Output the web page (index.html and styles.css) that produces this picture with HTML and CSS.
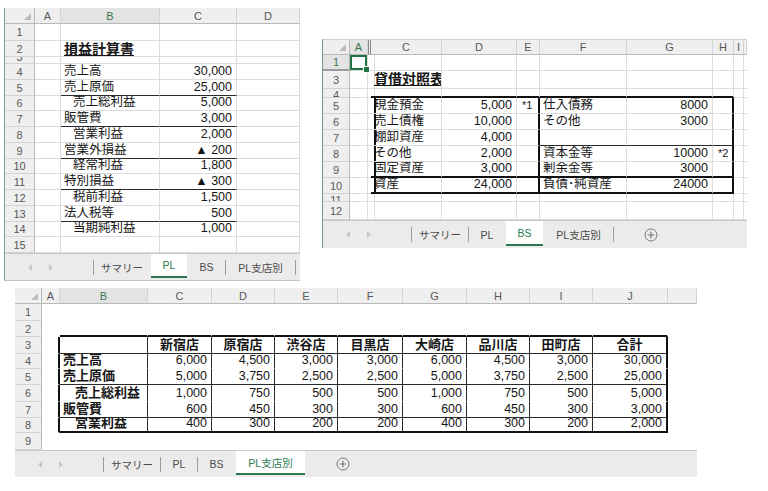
FILE: index.html
```html
<!DOCTYPE html>
<html lang="ja">
<head>
<meta charset="utf-8">
<title>PL / BS</title>
<link rel="stylesheet" href="styles.css">
</head>
<body>

<!-- Sheet 1: 損益計算書 -->
<div class="win w1">
  <div class="grid g1">
    <div class="cn"></div><div class="ch">A</div><div class="ch sel">B</div><div class="ch">C</div><div class="ch">D</div>
    <div class="rh">1</div><div></div><div></div><div></div><div></div>
    <div class="rh">2</div><div></div><div class="ttl">損益計算書</div><div></div><div></div>
    <div class="rh clipb">3</div><div></div><div></div><div></div><div></div>
    <div class="rh">4</div><div></div><div>売上高</div><div class="n">30,000</div><div></div>
    <div class="rh">5</div><div></div><div class="B1">売上原価</div><div class="n B1">25,000</div><div></div>
    <div class="rh">6</div><div></div><div class="ind">売上総利益</div><div class="n">5,000</div><div></div>
    <div class="rh">7</div><div></div><div class="B1">販管費</div><div class="n B1">3,000</div><div></div>
    <div class="rh">8</div><div></div><div class="ind">営業利益</div><div class="n">2,000</div><div></div>
    <div class="rh">9</div><div></div><div class="B1">営業外損益</div><div class="n B1">▲ 200</div><div></div>
    <div class="rh">10</div><div></div><div class="ind">経常利益</div><div class="n">1,800</div><div></div>
    <div class="rh">11</div><div></div><div class="B1">特別損益</div><div class="n B1">▲ 300</div><div></div>
    <div class="rh">12</div><div></div><div class="ind">税前利益</div><div class="n">1,500</div><div></div>
    <div class="rh">13</div><div></div><div class="B1">法人税等</div><div class="n B1">500</div><div></div>
    <div class="rh">14</div><div></div><div class="ind">当期純利益</div><div class="n">1,000</div><div></div>
    <div class="rh">15</div><div></div><div></div><div></div><div></div>
  </div>
  <div class="tabs">
    <div class="nav">
      <svg width="5" height="7" viewBox="0 0 5 7"><path d="M4 0L0 3.5L4 7Z" fill="#c6c6c6"/></svg>
      <svg width="5" height="7" viewBox="0 0 5 7"><path d="M1 0L5 3.5L1 7Z" fill="#c6c6c6"/></svg>
    </div>
    <span class="sep"></span><div class="tab t1">サマリー</div><span class="sep off"></span><div class="tab t2 on">PL</div><span class="sep off"></span><div class="tab t3">BS</div><span class="sep"></span><div class="tab t4">PL支店別</div><span class="sep"></span>
    <div class="plus"><svg width="14" height="14" viewBox="0 0 14 14"><circle cx="7" cy="7" r="6" fill="none" stroke="#7a7a7a" stroke-width="1"/><path d="M7 3.8V10.2M3.8 7H10.2" stroke="#7a7a7a" stroke-width="1.2"/></svg></div>
  </div>
</div>

<!-- Sheet 2: 貸借対照表 -->
<div class="win w2">
  <div class="grid g2">
    <div class="cn"></div><div class="ch sel">A</div><div class="ch hid"></div><div class="ch">C</div><div class="ch">D</div><div class="ch">E</div><div class="ch">F</div><div class="ch">G</div><div class="ch">H</div><div class="ch">I</div><div class="ch"></div>
    <div class="rh rsel">1</div><div class="selc"></div><div></div><div></div><div></div><div></div><div></div><div></div><div></div><div></div><div></div>
    <div class="rh">3</div><div></div><div></div><div class="ttl">貸借対照表</div><div></div><div></div><div></div><div></div><div></div><div></div><div></div>
    <div class="rh clipt">4</div><div></div><div></div><div class="B2"></div><div class="B2"></div><div class="B2"></div><div class="B2"></div><div class="B2"></div><div class="B2"></div><div></div><div></div>
    <div class="rh">5</div><div></div><div class="R2"></div><div>現金預金</div><div class="n">5,000</div><div class="R2 mk">*1</div><div>仕入債務</div><div class="n">8000</div><div class="R2"></div><div></div><div></div>
    <div class="rh">6</div><div></div><div class="R2"></div><div>売上債権</div><div class="n">10,000</div><div class="R2"></div><div>その他</div><div class="n">3000</div><div class="R2"></div><div></div><div></div>
    <div class="rh">7</div><div></div><div class="R2"></div><div>棚卸資産</div><div class="n">4,000</div><div class="R2"></div><div class="B1"></div><div class="B1"></div><div class="R2 B1"></div><div></div><div></div>
    <div class="rh">8</div><div></div><div class="R2"></div><div>その他</div><div class="n">2,000</div><div class="R2"></div><div>資本金等</div><div class="n">10000</div><div class="R2 mk">*2</div><div></div><div></div>
    <div class="rh">9</div><div></div><div class="R2"></div><div class="B2">固定資産</div><div class="n B2">3,000</div><div class="R2 B2"></div><div class="B2">剰余金等</div><div class="n B2">3000</div><div class="R2 B2"></div><div></div><div></div>
    <div class="rh">10</div><div></div><div class="R2"></div><div class="B2">資産</div><div class="n B2">24,000</div><div class="R2 B2"></div><div class="B2">負債･純資産</div><div class="n B2">24000</div><div class="R2 B2"></div><div></div><div></div>
    <div class="rh clipt">11</div><div></div><div></div><div></div><div></div><div></div><div></div><div></div><div></div><div></div><div></div>
    <div class="rh">12</div><div></div><div></div><div></div><div></div><div></div><div></div><div></div><div></div><div></div><div></div>
  </div>
  <div class="tabs">
    <div class="nav">
      <svg width="5" height="7" viewBox="0 0 5 7"><path d="M4 0L0 3.5L4 7Z" fill="#c6c6c6"/></svg>
      <svg width="5" height="7" viewBox="0 0 5 7"><path d="M1 0L5 3.5L1 7Z" fill="#c6c6c6"/></svg>
    </div>
    <span class="sep"></span><div class="tab t1">サマリー</div><span class="sep"></span><div class="tab t2">PL</div><span class="sep off"></span><div class="tab t3 on">BS</div><span class="sep off"></span><div class="tab t4">PL支店別</div><span class="sep"></span>
    <div class="plus"><svg width="14" height="14" viewBox="0 0 14 14"><circle cx="7" cy="7" r="6" fill="none" stroke="#7a7a7a" stroke-width="1"/><path d="M7 3.8V10.2M3.8 7H10.2" stroke="#7a7a7a" stroke-width="1.2"/></svg></div>
  </div>
</div>

<!-- Sheet 3: PL支店別 -->
<div class="win w3">
  <div class="grid g3 nogrid">
    <div class="cn"></div><div class="ch">A</div><div class="ch sel">B</div><div class="ch">C</div><div class="ch">D</div><div class="ch">E</div><div class="ch">F</div><div class="ch">G</div><div class="ch">H</div><div class="ch">I</div><div class="ch">J</div><div class="ch"></div>
    <div class="rh">1</div><div></div><div></div><div></div><div></div><div></div><div></div><div></div><div></div><div></div><div></div><div></div>
    <div class="rh">2</div><div></div><div class="B2"></div><div class="B2"></div><div class="B2"></div><div class="B2"></div><div class="B2"></div><div class="B2"></div><div class="B2"></div><div class="B2"></div><div class="B2"></div><div></div>
    <div class="rh">3</div><div class="R2"></div><div class="R1 B1"></div><div class="hd R1 B1">新宿店</div><div class="hd R1 B1">原宿店</div><div class="hd R1 B1">渋谷店</div><div class="hd R1 B1">目黒店</div><div class="hd R1 B1">大崎店</div><div class="hd R1 B1">品川店</div><div class="hd R1 B1">田町店</div><div class="hd R2 B1">合計</div><div></div>
    <div class="rh">4</div><div class="R2"></div><div class="lb R1">売上高</div><div class="n R1">6,000</div><div class="n R1">4,500</div><div class="n R1">3,000</div><div class="n R1">3,000</div><div class="n R1">6,000</div><div class="n R1">4,500</div><div class="n R1">3,000</div><div class="n R2">30,000</div><div></div>
    <div class="rh">5</div><div class="R2"></div><div class="lb R1 B1">売上原価</div><div class="n R1 B1">5,000</div><div class="n R1 B1">3,750</div><div class="n R1 B1">2,500</div><div class="n R1 B1">2,500</div><div class="n R1 B1">5,000</div><div class="n R1 B1">3,750</div><div class="n R1 B1">2,500</div><div class="n R2 B1">25,000</div><div></div>
    <div class="rh">6</div><div class="R2"></div><div class="lb ind2 R1">売上総利益</div><div class="n R1">1,000</div><div class="n R1">750</div><div class="n R1">500</div><div class="n R1">500</div><div class="n R1">1,000</div><div class="n R1">750</div><div class="n R1">500</div><div class="n R2">5,000</div><div></div>
    <div class="rh">7</div><div class="R2"></div><div class="lb R1 B1">販管費</div><div class="n R1 B1">600</div><div class="n R1 B1">450</div><div class="n R1 B1">300</div><div class="n R1 B1">300</div><div class="n R1 B1">600</div><div class="n R1 B1">450</div><div class="n R1 B1">300</div><div class="n R2 B1">3,000</div><div></div>
    <div class="rh">8</div><div class="R2"></div><div class="lb ind2 R1 B2">営業利益</div><div class="n R1 B2">400</div><div class="n R1 B2">300</div><div class="n R1 B2">200</div><div class="n R1 B2">200</div><div class="n R1 B2">400</div><div class="n R1 B2">300</div><div class="n R1 B2">200</div><div class="n R2 B2">2,000</div><div></div>
    <div class="rh">9</div><div></div><div></div><div></div><div></div><div></div><div></div><div></div><div></div><div></div><div></div><div></div>
  </div>
  <div class="tabs">
    <div class="nav">
      <svg width="5" height="7" viewBox="0 0 5 7"><path d="M4 0L0 3.5L4 7Z" fill="#c6c6c6"/></svg>
      <svg width="5" height="7" viewBox="0 0 5 7"><path d="M1 0L5 3.5L1 7Z" fill="#c6c6c6"/></svg>
    </div>
    <span class="sep"></span><div class="tab t1">サマリー</div><span class="sep"></span><div class="tab t2">PL</div><span class="sep"></span><div class="tab t3">BS</div><span class="sep off"></span><div class="tab t4 on">PL支店別</div><span class="sep off"></span>
    <div class="plus"><svg width="14" height="14" viewBox="0 0 14 14"><circle cx="7" cy="7" r="6" fill="none" stroke="#7a7a7a" stroke-width="1"/><path d="M7 3.8V10.2M3.8 7H10.2" stroke="#7a7a7a" stroke-width="1.2"/></svg></div>
  </div>
</div>

</body>
</html>
```

FILE: styles.css
```css
* { box-sizing: border-box; }

html, body {
  margin: 0;
  padding: 0;
  background: #ffffff;
}

body {
  position: relative;
  width: 768px;
  height: 491px;
  overflow: hidden;
  font-family: "Liberation Sans", "Noto Sans CJK JP", sans-serif;
  color: #161616;
}

/* windows placed on the free canvas */
.win {
  position: absolute;
  background: #ffffff;
  overflow: hidden;
  border-bottom: 1px solid #c4c4c4;
}
.w1 { left: 4px; top: 8px; width: 296px; border-left: 1px solid #7aa58a; }
.w2 { left: 322px; top: 39px; width: 425px; border-left: 1px solid #6f9f80; border-top: 1px solid #cfcfcf; border-bottom: none; }
.w3 { left: 15px; top: 288px; width: 682px; border-bottom: none; }

/* grids */
.grid { display: grid; }

.g1 {
  grid-template-columns: 30px 26px 99px 77px 63px;
  grid-template-rows: 16px 17px 16px 7px 16px 16px 15px 16px 16px 16px 15px 16px 16px 16px 15px 16px;
}
.g2 {
  grid-template-columns: 27px 18px 3px 71px 75px 23px 87px 86px 21px 10px 3px;
  grid-template-rows: 15px 16px 18px 9px 16px 16px 16px 16px 16px 16px 8px 18px;
}
.g3 {
  grid-template-columns: 27px 18px 88px 64px 63px 63px 65px 64px 63px 63px 75px 29px;
  grid-template-rows: 16px 17px 16px 17px 15px 16px 17px 16px 15px 17px;
}

.grid > div {
  display: flex;
  align-items: flex-end;
  padding: 0 3px 1px 3px;
  border-right: 1px solid #dcdcdc;
  border-bottom: 1px solid #dcdcdc;
  font-size: 12.5px;
  line-height: 14px;
  white-space: nowrap;
  overflow: hidden;
}
.nogrid > div { border-color: transparent; }

/* headers */
.grid > .ch {
  justify-content: center;
  align-items: center;
  padding: 0;
  background: #efefef;
  border-right: 1px solid #d3d3d3;
  border-bottom: 1px solid #b9b9b9;
  color: #585858;
  font-size: 11px;
}
.grid > .ch.sel { background: #e3e3e3; color: #3f7556; }
.grid > .ch.hid { border-left: 1px solid #8a8a8a; border-right: 1px solid #8a8a8a; }
.grid > .rh {
  justify-content: center;
  align-items: center;
  padding: 0;
  background: #efefef;
  border-right: 1px solid #b9b9b9;
  border-bottom: 1px solid #d3d3d3;
  color: #585858;
  font-size: 11px;
}
.grid > .rh.clipb { align-items: flex-end; line-height: 12px; }
.grid > .rh.clipt { align-items: flex-start; line-height: 12px; }
.grid > .rh.rsel { background: #e3e3e3; color: #3f7556; border-bottom: 2px solid #9c9c9c; }
.grid > .cn {
  justify-content: flex-end;
  align-items: flex-end;
  padding: 0 3px 3px 0;
  background: #efefef;
  border-right: 1px solid #b9b9b9;
  border-bottom: 1px solid #b9b9b9;
}
.cn::after {
  content: "";
  width: 0;
  height: 0;
  border-left: 7px solid transparent;
  border-bottom: 7px solid #bcbcbc;
}

/* cell content */
.grid > .n { justify-content: flex-end; padding-right: 4px; }
.grid > .ind { padding-left: 12px; }
.grid > .ttl {
  padding-bottom: 0;
  font-size: 14px;
  font-weight: bold;
  line-height: 14px;
  text-decoration: underline;
  text-underline-offset: 1px;
}
.g2 > .ttl { line-height: 16px; padding-bottom: 1px; }
.grid > .mk { padding-left: 5px; font-size: 11px; }
.grid > .hd { justify-content: center; font-weight: bold; font-size: 13px; }
.grid > .lb { font-weight: bold; font-size: 13px; }
.grid > .ind2 { padding-left: 15px; }

/* table borders */
.grid > .R2 { border-right: 2px solid #111111; }
.grid > .R1 { border-right: 1px solid #2a2a2a; }
.grid > .B2 { border-bottom: 2px solid #111111; }
.grid > .B1 { border-bottom: 1px solid #2a2a2a; }

/* selected cell */
.grid > .selc {
  position: relative;
  overflow: visible;
  box-shadow: inset 0 0 0 2px #217346;
}
.selc::after {
  content: "";
  position: absolute;
  right: -3px;
  bottom: -3px;
  width: 5px;
  height: 5px;
  background: #217346;
  border: 1px solid #ffffff;
}

/* sheet tabs */
.tabs {
  display: flex;
  align-items: stretch;
  height: 27px;
  background: #ebebeb;
  border-top: 1px solid #c8c8c8;
  font-size: 10.5px;
  color: #4a4a4a;
}
.w2 .tabs { height: 28px; }
.nav {
  flex: none;
  width: 88px;
  display: flex;
  align-items: center;
  gap: 15px;
  padding-left: 23px;
}
.sep {
  flex: none;
  width: 1px;
  height: 15px;
  align-self: center;
  background: #9d9d9d;
}
.sep.off { background: transparent; }
.tab {
  flex: none;
  display: flex;
  align-items: center;
  justify-content: center;
}
.t1 { width: 56px; }
.t2 { width: 36px; }
.t3 { width: 37px; }
.t4 { width: 69px; }
.tab.on {
  background: #ffffff;
  color: #2b7a4f;
  border-bottom: 2px solid #2b7a4f;
  margin-bottom: 2px;
}
.plus {
  flex: none;
  display: flex;
  align-items: center;
  padding-left: 30px;
}
```
